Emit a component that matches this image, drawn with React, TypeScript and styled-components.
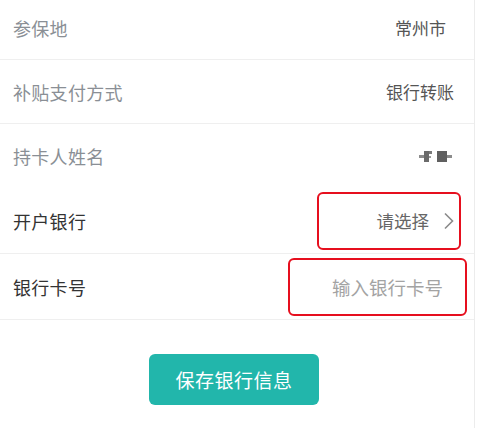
import styled, { createGlobalStyle } from 'styled-components'

const GlobalStyle = createGlobalStyle`
  html, body {
    margin: 0;
    padding: 0;
    background: #ffffff;
    overflow: hidden;
  }
  body {
    font-family: "Noto Sans CJK SC", "Noto Sans", sans-serif;
  }
`

const Page = styled.div`
  width: 475px;
  height: 428px;
  border-right: 1px solid #ececec;
  box-sizing: border-box;
  display: flex;
  flex-direction: column;
`

const List = styled.div`
  display: flex;
  flex-direction: column;
  margin-top: -4px;
`

const Row = styled.div<{ height: number; divider?: boolean }>`
  height: ${({ height }) => height}px;
  display: flex;
  align-items: center;
  justify-content: space-between;
  padding-left: 13px;
  box-sizing: border-box;
  border-bottom: ${({ divider }) => (divider ? '1px solid #efefef' : 'none')};
`

const Label = styled.span<{ dark?: boolean }>`
  font-size: 18px;
  color: ${({ dark }) => (dark ? '#333333' : '#8a8f95')};
  letter-spacing: 0.3px;
`

const Value = styled.span<{ right: number }>`
  font-size: 17px;
  color: #555555;
  margin-right: ${({ right }) => right}px;
`

const Annotation = styled.div<{ width: number; right: number; pad: number }>`
  width: ${({ width }) => width}px;
  height: 58px;
  margin-right: ${({ right }) => right}px;
  padding-right: ${({ pad }) => pad}px;
  box-sizing: border-box;
  border: 2.5px solid #e60f1e;
  border-radius: 6px;
  display: flex;
  align-items: center;
  justify-content: flex-end;
  gap: 14px;
`

const Select = styled.span`
  font-size: 17.5px;
  color: #666666;
`

const Placeholder = styled.span`
  font-size: 18.5px;
  color: #a3a3a3;
`

const Masked = styled.svg`
  margin-right: 20px;
`

const ButtonWrap = styled.div`
  display: flex;
  justify-content: center;
  padding-right: 6px;
  margin-top: 34px;
`

const SaveButton = styled.button`
  width: 170px;
  height: 51px;
  border: none;
  border-radius: 6px;
  background: #22b6ab;
  color: #ffffff;
  font-family: "Noto Sans CJK SC", "Noto Sans", sans-serif;
  font-size: 19px;
  letter-spacing: 0.5px;
  cursor: pointer;
`

const Chevron = () => (
  <svg width="12" height="18" viewBox="0 0 12 18">
    <path d="M2 1.5 L9.5 9 L2 16.5" fill="none" stroke="#8a8a8a" strokeWidth="1.6" />
  </svg>
)

export default function App() {
  return (
    <Page>
      <GlobalStyle />
      <List>
        <Row height={64} divider>
          <Label>参保地</Label>
          <Value right={28}>常州市</Value>
        </Row>
        <Row height={64} divider>
          <Label>补贴支付方式</Label>
          <Value right={20}>银行转账</Value>
        </Row>
        <Row height={64}>
          <Label>持卡人姓名</Label>
          <Masked width="35" height="12" viewBox="0 0 35 12">
            <rect x="0" y="5" width="5" height="3" fill="#8c8c8c" />
            <rect x="5" y="1" width="5" height="11" fill="#6b6b6b" />
            <rect x="10" y="1" width="3" height="3" fill="#7a7a7a" />
            <rect x="10" y="6" width="2" height="2" fill="#9a9a9a" />
            <rect x="18" y="1" width="10" height="11" fill="#606060" />
            <rect x="28" y="5" width="5" height="3" fill="#8c8c8c" />
          </Masked>
        </Row>
        <Row height={66} divider>
          <Label dark>开户银行</Label>
          <Annotation width={144} right={13} pad={4}>
            <Select>请选择</Select>
            <Chevron />
          </Annotation>
        </Row>
        <Row height={66} divider>
          <Label dark>银行卡号</Label>
          <Annotation width={179} right={7} pad={22}>
            <Placeholder>输入银行卡号</Placeholder>
          </Annotation>
        </Row>
      </List>
      <ButtonWrap>
        <SaveButton>保存银行信息</SaveButton>
      </ButtonWrap>
    </Page>
  )
}
